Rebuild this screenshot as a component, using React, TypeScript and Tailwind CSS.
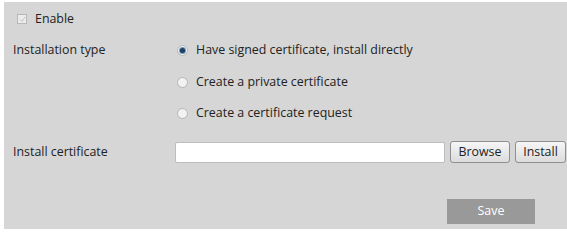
import React from "react";

function Radio({ checked }: { checked?: boolean }) {
  return (
    <span className="w-[11px] h-[11px] rounded-full border border-[#b5b5b5] bg-[#f2f2f2] flex items-center justify-center shrink-0">
      {checked && <span className="w-[5px] h-[5px] rounded-full bg-[#1f3f63] ring-1 ring-[#6f95bd]" />}
    </span>
  );
}

export default function App() {
  return (
    <div className="w-[567px] h-[232px] bg-white pl-[4px] pt-[2px] pb-[3px]" style={{ fontFamily: '"Open Sans", "Noto Sans", sans-serif' }}>
      <div className="h-full bg-[#d6d6d6] text-[12.4px] text-[#222] relative">
        <div className="flex items-center h-[33px] pl-[13px] pt-[1px]">
          <span className="w-[10px] h-[10px] border border-[#b8b8b8] bg-[#ececec] flex items-center justify-center">
            <svg width="7" height="7" viewBox="0 0 7 7"><path d="M1 3.5 L3 5.5 L6 1" stroke="#c4c4c4" strokeWidth="1" fill="none" /></svg>
          </span>
          <span className="ml-[8px]">Enable</span>
        </div>
        <div className="flex">
          <div className="w-[171px] pl-[9px] h-[31px] flex items-center">Installation type</div>
          <div className="flex flex-col">
            <label className="flex items-center h-[31px] gap-[8px] pl-[2px]"><Radio checked /><span>Have signed certificate, install directly</span></label>
            <label className="flex items-center h-[32px] gap-[8px] pl-[2px]"><Radio /><span>Create a private certificate</span></label>
            <label className="flex items-center h-[31px] gap-[8px] pl-[2px]"><Radio /><span>Create a certificate request</span></label>
          </div>
        </div>
        <div className="flex items-center mt-[12px] h-[22px]">
          <div className="w-[171px] pl-[9px]">Install certificate</div>
          <div className="w-[270px] h-[21px] bg-white border border-[#bdbdbd] rounded-[2px]" />
          <button className="ml-[5px] w-[60px] h-[22px] border border-[#8f8f8f] rounded-[3px] bg-gradient-to-b from-[#f6f6f6] to-[#dcdcdc] text-[12.4px] text-[#222]">Browse</button>
          <button className="ml-[5px] w-[51px] h-[22px] border border-[#8f8f8f] rounded-[3px] bg-gradient-to-b from-[#f6f6f6] to-[#dcdcdc] text-[12.4px] text-[#222]">Install</button>
        </div>
        <div className="flex mt-[36px] pl-[443px]">
          <button className="w-[88px] h-[25px] bg-[#999999] text-white text-[12.4px]">Save</button>
        </div>
      </div>
    </div>
  );
}
